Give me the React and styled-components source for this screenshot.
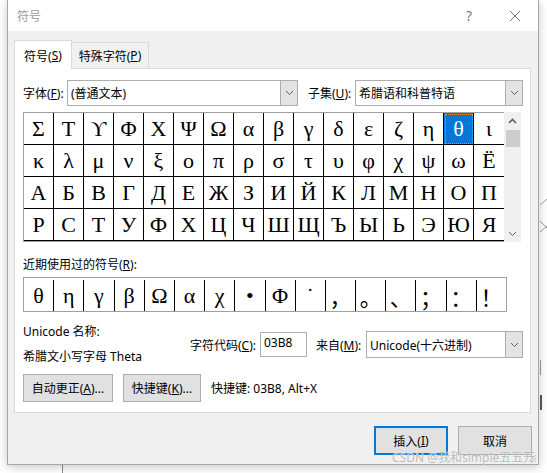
import React from 'react';
import styled, { createGlobalStyle } from 'styled-components';

const GlobalStyle = createGlobalStyle`
  html, body {
    margin: 0;
    padding: 0;
    background: #fff;
  }
  body {
    width: 547px;
    height: 473px;
    overflow: hidden;
    font-family: "Noto Sans", "Noto Sans CJK SC", sans-serif;
    font-size: 12px;
    color: #000;
  }
`;

const Desktop = styled.div`
  position: relative;
  width: 547px;
  height: 473px;
  overflow: hidden;
  background: #fff;
`;

const Backdrop = styled.svg`
  position: absolute;
  left: 0;
  top: 0;
  z-index: 0;
`;

const Dialog = styled.div`
  position: relative;
  z-index: 1;
  margin-left: 7px;
  width: 532px;
  height: 465px;
  box-sizing: border-box;
  border: 1px solid #a6a6a6;
  border-top: none;
  background: #f0f0f0;
  box-shadow: 0 2px 9px rgba(0, 0, 0, 0.22);
  display: flex;
  flex-direction: column;
`;

const TitleBar = styled.div`
  height: 31px;
  flex-shrink: 0;
  background: #fff;
  display: flex;
  align-items: center;
  padding-left: 9px;
`;

const Title = styled.span`
  color: #9b9b9b;
  font-size: 12px;
  flex: 1;
`;

const TitleButton = styled.div`
  width: 46px;
  height: 31px;
  display: flex;
  align-items: center;
  justify-content: center;
  color: #7a7a7a;
  font-size: 14px;
`;

const Body = styled.div`
  flex: 1;
  padding: 9px 7px 0 6px;
  display: flex;
  flex-direction: column;
`;

const TabRow = styled.div`
  display: flex;
  align-items: flex-end;
  height: 28px;
`;

const Tab = styled.div`
  position: relative;
  z-index: 1;
  box-sizing: border-box;
  width: ${p => p.$width}px;
  height: ${p => (p.$active ? 29 : 26)}px;
  margin-bottom: ${p => (p.$active ? -1 : 0)}px;
  background: ${p => (p.$active ? '#fff' : '#f0f0f0')};
  border: 1px solid #d9d9d9;
  border-bottom: none;
  border-left: ${p => (p.$active ? '1px solid #d9d9d9' : 'none')};
  display: flex;
  justify-content: center;
  padding-top: ${p => (p.$active ? 6 : 4)}px;
`;

const Panel = styled.div`
  height: 345px;
  box-sizing: border-box;
  border: 1px solid #d9d9d9;
  background: #fff;
  padding: 11px 7px 0 8px;
  display: flex;
  flex-direction: column;
`;

const Row = styled.div`
  display: flex;
  align-items: center;
  margin-top: ${p => p.$top || 0}px;
`;

const FieldLabel = styled.span`
  width: ${p => p.$width}px;
  margin-left: ${p => p.$left || 0}px;
  flex-shrink: 0;
  white-space: nowrap;
`;

const Select = styled.div`
  width: ${p => p.$width}px;
  height: ${p => p.$height || 26}px;
  box-sizing: border-box;
  border: 1px solid #adadad;
  background: #fff;
  display: flex;
  align-items: center;
  flex-shrink: 0;
`;

const SelectText = styled.span`
  flex: 1;
  padding-left: 3px;
  white-space: nowrap;
  overflow: hidden;
`;

const DropButton = styled.div`
  width: 17px;
  height: 100%;
  box-sizing: border-box;
  background: #e3e3e3;
  border-left: 1px solid #adadad;
  display: flex;
  align-items: center;
  justify-content: center;
`;

const GridArea = styled.div`
  display: flex;
  margin-top: 6px;
`;

const SymbolGrid = styled.div`
  display: grid;
  grid-template-columns: repeat(16, 30px);
  grid-auto-rows: 32px;
  border: 1px solid #a0a0a0;
  border-right: none;
`;

const Cell = styled.div`
  box-sizing: border-box;
  border-right: 1px solid #000;
  border-bottom: 1px solid #000;
  display: flex;
  align-items: center;
  justify-content: center;
  font-family: "Liberation Serif", "DejaVu Serif", serif;
  font-size: 22px;
  background: ${p => (p.$selected ? '#0078d7' : '#fff')};
  color: ${p => (p.$selected ? '#fff' : '#000')};
  outline: ${p => (p.$selected ? '1px dotted #e0902a' : 'none')};
  outline-offset: -2px;

  &:nth-child(16n) {
    border-right: none;
  }
`;

const Scrollbar = styled.div`
  width: 17px;
  height: 130px;
  background: #f0f0f0;
  display: flex;
  flex-direction: column;
`;

const ScrollArrow = styled.div`
  height: 17px;
  display: flex;
  align-items: center;
  justify-content: center;
`;

const ScrollTrack = styled.div`
  flex: 1;
  padding: 1px 1px 0 2px;
`;

const Thumb = styled.div`
  height: 17px;
  background: #cdcdcd;
`;

const RecentLabel = styled.div`
  margin-top: 15px;
  line-height: 16px;
`;

const RecentBox = styled.div`
  margin-top: 4px;
  width: 484px;
  height: 35px;
  box-sizing: border-box;
  border: 1px solid #a0a0a0;
  display: flex;
`;

const RecentCell = styled.div`
  flex: 1;
  margin-top: 2px;
  border-right: 1px solid #000;
  display: flex;
  align-items: center;
  justify-content: center;
  font-family: "Liberation Serif", "Noto Sans CJK SC", serif;
  font-size: 22px;

  &:last-child {
    border-right: none;
  }
`;

const InfoColumn = styled.div`
  width: 167px;
  display: flex;
  flex-direction: column;
  gap: 9px;
  line-height: 16px;
  flex-shrink: 0;
`;

const CodeInput = styled.div`
  width: 48px;
  height: 25px;
  box-sizing: border-box;
  border: 1px solid #adadad;
  padding: 2px 0 0 3px;
  line-height: 16px;
`;

const Button = styled.div`
  width: ${p => p.$width}px;
  height: ${p => p.$height || 28}px;
  box-sizing: border-box;
  background: #e1e1e1;
  border: ${p => (p.$primary ? '2px solid #0078d7' : '1px solid #adadad')};
  display: flex;
  align-items: center;
  justify-content: center;
  white-space: nowrap;
  flex-shrink: 0;
`;

const ButtonRow = styled.div`
  display: flex;
  align-items: center;
  gap: 10px;
  margin-top: 9px;
`;

const Footer = styled.div`
  display: flex;
  justify-content: flex-end;
  gap: 10px;
  padding-top: 13px;
  margin-right: -1px;
`;

const Watermark = styled.div`
  position: absolute;
  z-index: 2;
  left: 392px;
  top: 450px;
  font-size: 12px;
  line-height: 16px;
  color: #b9b9b9;
  text-shadow: 0 0 1px #fff;
  white-space: nowrap;
`;

const Grip = styled.svg`
  position: absolute;
  right: 1px;
  bottom: 1px;
`;

const rows = [
  'ΣΤϒΦΧΨΩαβγδεζηθι',
  'κλμνξοπρστυφχψωЁ',
  'АБВГДЕЖЗИЙКЛМНОП',
  'РСТУФХЦЧШЩЪЫЬЭЮЯ',
];

const recent = ['θ', 'η', 'γ', 'β', 'Ω', 'α', 'χ', '•', 'Φ', '˙', '，', '。', '、', '；', '：', '！'];

const Chevron = ({ up }) => (
  <svg width="9" height="6" viewBox="0 0 9 6">
    <path
      d={up ? 'M1 5 L4.5 1.5 L8 5' : 'M1 1 L4.5 4.5 L8 1'}
      fill="none"
      stroke="#606060"
      strokeWidth={up ? 1.6 : 1}
    />
  </svg>
);

const Dropdown = ({ width, height, children }) => (
  <Select $width={width} $height={height}>
    <SelectText>{children}</SelectText>
    <DropButton>
      <Chevron />
    </DropButton>
  </Select>
);

export default function App() {
  const symbols = rows.flatMap(r => Array.from(r));

  return (
    <Desktop>
      <GlobalStyle />
      <Backdrop width="547" height="473">
        <line x1="62.5" y1="460" x2="62.5" y2="473" stroke="#8a8a8a" />
        <line x1="540" y1="205" x2="547" y2="199" stroke="#9a9a9a" />
        <line x1="540" y1="221" x2="547" y2="228" stroke="#9a9a9a" />
        <line x1="540" y1="232" x2="547" y2="226" stroke="#9a9a9a" />
        <line x1="540.5" y1="360" x2="540.5" y2="375" stroke="#9a9a9a" />
        <line x1="541" y1="395" x2="541" y2="410" stroke="#222" strokeWidth="1.5" />
      </Backdrop>

      <Dialog>
        <TitleBar>
          <Title>符号</Title>
          <TitleButton>?</TitleButton>
          <TitleButton>
            <svg width="12" height="12" viewBox="0 0 12 12">
              <path d="M1 1 L11 11 M11 1 L1 11" stroke="#6f6f6f" strokeWidth="1" />
            </svg>
          </TitleButton>
        </TitleBar>

        <Body>
          <TabRow>
            <Tab $active $width={58}>
              符号(<u>S</u>)
            </Tab>
            <Tab $width={77}>
              特殊字符(<u>P</u>)
            </Tab>
          </TabRow>

          <Panel>
            <Row>
              <FieldLabel $width={44}>
                字体(<u>F</u>):
              </FieldLabel>
              <Dropdown width={231}>(普通文本)</Dropdown>
              <FieldLabel $width={47} $left={10}>
                子集(<u>U</u>):
              </FieldLabel>
              <Dropdown width={168}>希腊语和科普特语</Dropdown>
            </Row>

            <GridArea>
              <SymbolGrid>
                {symbols.map((c, i) => (
                  <Cell key={i} $selected={c === 'θ'}>
                    {c}
                  </Cell>
                ))}
              </SymbolGrid>
              <Scrollbar>
                <ScrollArrow>
                  <Chevron up />
                </ScrollArrow>
                <ScrollTrack>
                  <Thumb />
                </ScrollTrack>
                <ScrollArrow>
                  <Chevron />
                </ScrollArrow>
              </Scrollbar>
            </GridArea>

            <RecentLabel>
              近期使用过的符号(<u>R</u>):
            </RecentLabel>
            <RecentBox>
              {recent.map((c, i) => (
                <RecentCell key={i}>{c}</RecentCell>
              ))}
            </RecentBox>

            <Row $top={12}>
              <InfoColumn>
                <span>Unicode 名称:</span>
                <span>希腊文小写字母 Theta</span>
              </InfoColumn>
              <FieldLabel $width={70}>
                字符代码(<u>C</u>):
              </FieldLabel>
              <CodeInput>03B8</CodeInput>
              <FieldLabel $width={50} $left={9}>
                来自(<u>M</u>):
              </FieldLabel>
              <Dropdown width={157} height={27}>
                Unicode(十六进制)
              </Dropdown>
            </Row>

            <ButtonRow>
              <Button $width={90}>
                自动更正(<u>A</u>)...
              </Button>
              <Button $width={78}>
                快捷键(<u>K</u>)...
              </Button>
              <span>快捷键: 03B8, Alt+X</span>
            </ButtonRow>
          </Panel>

          <Footer>
            <Button $width={74} $height={29} $primary>
              插入(<u>I</u>)
            </Button>
            <Button $width={74} $height={29}>
              取消
            </Button>
          </Footer>
        </Body>

        <Grip width="10" height="10" viewBox="0 0 10 10">
          <path d="M9 2 L2 9 M9 5 L5 9 M9 8 L8 9" stroke="#b5b5b5" />
        </Grip>
      </Dialog>

      <Watermark>CSDN @我和simple五五开</Watermark>
    </Desktop>
  );
}
